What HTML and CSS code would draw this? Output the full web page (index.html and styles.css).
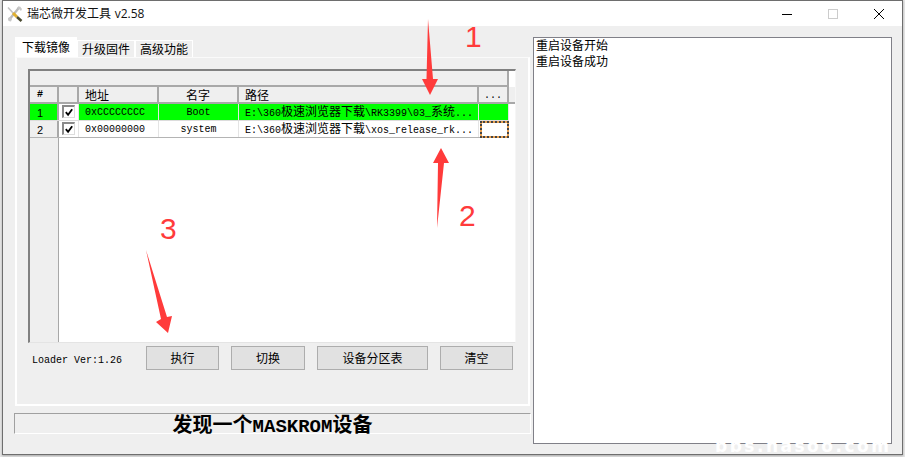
FILE: index.html
```html
<!DOCTYPE html>
<html lang="zh-CN">
<head>
  <meta charset="utf-8">
  <meta name="viewport" content="width=device-width,initial-scale=1">
  <title>瑞芯微开发工具</title>
  <link rel="stylesheet" href="styles.css">
</head>
<body>
  <div class="window">
    <div class="titlebar">
      <svg class="app-icon" width="16" height="16" viewBox="0 0 16 16">
        <path d="M12.500 1 2 14" stroke="#bcbcbc" stroke-width="2.400" fill="none"/>
        <path d="M10 1.500 13 .5 15 3 14 5 12.500 3.500z M1 12l2-1 2 2-1 2.500-2.500-.5z" fill="#c8c8c8"/>
        <path d="M1 1.500 7 8" stroke="#c4c4c4" stroke-width="1.600" fill="none"/>
        <path d="M6 7 10 11" stroke="#e0b030" stroke-width="3" fill="none"/>
        <path d="M10 11 14.500 15" stroke="#4a4a30" stroke-width="2.600" fill="none"/>
      </svg>
      <span class="title-text">瑞芯微开发工具 <span class="title-ver">v2.58</span></span>
      <div class="win-btns">
        <div class="win-btn"><svg width="12" height="12" viewBox="0 0 12 12"><path d="M1 6.500h10" stroke="#000"/></svg></div>
        <div class="win-btn"><svg width="12" height="12" viewBox="0 0 12 12"><rect x="1.500" y="1.500" width="9" height="9" fill="none" stroke="#ccc"/></svg></div>
        <div class="win-btn"><svg width="12" height="12" viewBox="0 0 12 12"><path d="M1 1l10 10M11 1 1 11" stroke="#000"/></svg></div>
      </div>
    </div>

    <div class="client">
      <div class="left">
        <div class="tabs">
          <div class="tab tab-on">下载镜像</div>
          <div class="tab">升级固件</div>
          <div class="tab">高级功能</div>
        </div>

        <div class="panel">
          <div class="grid">
            <div class="band"></div>
            <div class="head-wrap">
              <div class="cols">
                <div class="hd hd-num">#</div>
                <div class="hd"></div>
                <div class="hd hd-pad">地址</div>
                <div class="hd hd-mid">名字</div>
                <div class="hd hd-pad">路径</div>
                <div class="hd hd-more">...</div>
              </div>
            </div>

            <div class="cols row row-sel">
              <div class="td td-num">1</div>
              <div class="td td-chk"><span class="chk"><svg width="11" height="11" viewBox="0 0 11 11"><path d="M2 5l2.500 3L9 2" fill="none" stroke="#000" stroke-width="2"/></svg></span></div>
              <div class="td td-pad">0xCCCCCCCC</div>
              <div class="td td-mid">Boot</div>
              <div class="td td-pad">E:\360<span class="hz">极速浏览器下载</span>\RK3399\03_<span class="hz">系统</span>...</div>
              <div class="td"></div>
            </div>
            <div class="cols row">
              <div class="td td-num">2</div>
              <div class="td td-chk"><span class="chk"><svg width="11" height="11" viewBox="0 0 11 11"><path d="M2 5l2.500 3L9 2" fill="none" stroke="#000" stroke-width="2"/></svg></span></div>
              <div class="td td-pad">0x00000000</div>
              <div class="td td-mid">system</div>
              <div class="td td-pad">E:\360<span class="hz">极速浏览器下载</span>\xos_release_rk...</div>
              <div class="td td-focus"></div>
            </div>

            <div class="filler"><div class="gutter"></div></div>
          </div>

          <div class="toolbar">
            <div class="loader">Loader Ver:1.26</div>
            <button class="btn">执行</button>
            <button class="btn btn-b">切换</button>
            <button class="btn btn-w">设备分区表</button>
            <button class="btn">清空</button>
          </div>
        </div>

        <div class="status">发现一个<span class="status-asc">MASKROM</span>设备</div>
      </div>

      <div class="log">
        <div class="log-line">重启设备开始</div>
        <div>重启设备成功</div>
      </div>
    </div>
  </div>

  <svg class="marks" width="905" height="457" viewBox="0 0 905 457">
    <path d="M428 19 426.500 79 422 79 430 95 438 79 433 79z" fill="#ff3b3b"/>
    <path d="M437 228 438 163 433 163 441 148 449 163 444 163z" fill="#ff3b3b"/>
    <path d="M146 250 161 319 156 322 168 333 172 316 167 317z" fill="#ff3b3b"/>
  </svg>
  <span class="num num-1">1</span>
  <span class="num num-2">2</span>
  <span class="num num-3">3</span>
  <span class="wm">bbs.nasoo.com</span>
</body>
</html>
```

FILE: styles.css
```css
html, body { margin: 0; height: 100%; }
body { background: #e6e6e6; overflow: hidden; font: 12px/16px "Noto Sans CJK SC", sans-serif; color: #000; }
.window { box-sizing: border-box; width: 901px; height: 455px; margin-left: 2px; border: 1px solid #6e6e6e; background: #efefef; box-shadow: 0 1px 2px #aaa; }

.titlebar { display: flex; align-items: center; height: 25px; background: #fff; }
.app-icon { margin-left: 4px; margin-right: 4px; }
.title-text { font-size: 12px; color: #111; word-spacing: 1px; }
.title-ver { font-family: "Open Sans", sans-serif; }
.win-btns { display: flex; margin-left: auto; }
.win-btn { display: flex; align-items: center; justify-content: center; width: 46px; height: 25px; }

.client { display: flex; gap: 2px; padding: 11px 0 0 11px; }
.left { width: 517px; }

.tabs { display: flex; align-items: flex-end; height: 20px; padding-left: 1px; }
.tab { box-sizing: border-box; width: 58px; height: 17px; line-height: 16px; text-align: center; border: 1px solid #fff; border-bottom: 0; }
.tab-on { width: 62px; height: 20px; line-height: 18px; background: #fff; }

.panel { box-sizing: border-box; width: 515px; height: 349px; margin-left: 1px; padding: 11px 0 0 11px; border: 2px solid #fff; border-top: 1px solid #fafafa; }

.grid { box-sizing: border-box; display: flex; flex-direction: column; width: 488px; height: 274px; background: #fff; border-top: 2px solid #808080; border-left: 2px solid #808080; border-right: 1px solid #f6f6f6; border-bottom: 1px solid #e4e4e4; }
.band { box-sizing: border-box; flex: none; width: 479px; height: 16px; background: #efefef; border-right: 2px solid #a8a8a8; border-bottom: 2px solid #a8a8a8; }
.head-wrap { flex: none; background: #efefef; border-bottom: 2px solid #a8a8a8; }

.cols { display: grid; grid-template-columns: 29px 20px 80px 80px 240px 30px; width: 479px; }
.hd { box-sizing: border-box; height: 15px; line-height: 15px; border-right: 2px solid #a8a8a8; white-space: nowrap; }
.hd-num { padding-left: 7px; font: bold 10px/15px "Liberation Mono", monospace; }
.hd-pad { padding-left: 6px; }
.hd-mid { text-align: center; }
.hd-more { text-align: center; font: 10px/18px "Liberation Mono", monospace; }

.row { flex: none; height: 17px; border-bottom: 1px solid #b4b4b4; box-sizing: border-box; font: 10px/18px "Liberation Mono", monospace; }
.row-sel { background: #00ff00; border-bottom-color: #dcdcdc; }
.td { box-sizing: border-box; min-width: 0; height: 16px; white-space: nowrap; border-right: 1px solid #e4e4e4; }
.hz { font: 12px/14px "Noto Sans CJK SC", sans-serif; }
.td-num { padding-left: 7px; background: #efefef; border-right: 2px solid #a8a8a8; font-family: "Liberation Sans", sans-serif; font-size: 11px; }
.row-sel .td-num { background: #00ff00; }
.td-chk { padding: 1px 0 0 3px; background: #fff; }
.td-pad { padding-left: 6px; }
.td-mid { text-align: center; }
.td-focus { margin-left: 1px; background: linear-gradient(#fff, #fff) padding-box, #e9a050 border-box; border: 2px dotted #444; height: 17px; }

.chk { box-sizing: border-box; display: flex; align-items: center; justify-content: center; width: 13px; height: 13px; background: #fff; border: 2px solid #8a8a8a; border-right: 1px solid #dcdcdc; border-bottom: 1px solid #dcdcdc; }

.filler { flex: 1; }
.gutter { box-sizing: border-box; width: 29px; height: 100%; background: #efefef; border-right: 1px solid #a8a8a8; }

.toolbar { display: flex; align-items: center; gap: 12px; margin-top: 3px; }
.loader { width: 102px; padding-left: 4px; font: 10px/16px "Liberation Mono", monospace; margin-top: 5px; white-space: nowrap; }
.btn { box-sizing: border-box; width: 73px; height: 24px; padding: 0; background: #e1e1e1; border: 1px solid #adadad; font: 12px/16px "Noto Sans CJK SC", sans-serif; color: #000; }
.btn-b { width: 74px; }
.btn-w { width: 111px; }

.status { box-sizing: border-box; width: 517px; height: 21px; margin-top: 7px; text-align: center; font: bold 20px/19px "Noto Sans CJK SC", sans-serif; border-top: 1px solid #a0a0a0; border-left: 1px solid #a0a0a0; border-right: 1px solid #fff; border-bottom: 1px solid #fff; white-space: nowrap; }
.status-asc { font: bold 19px/19px "Liberation Mono", monospace; }

.log { box-sizing: border-box; width: 359px; height: 407px; padding: 0 2px; background: #fff; border: 1px solid #808088; }
.log-line { margin-top: -1px; }

.marks { position: absolute; left: 0; top: 0; pointer-events: none; }
.num { position: absolute; font: 30px/30px "Liberation Sans", sans-serif; color: #ff3b3b; }
.num-1 { left: 465px; top: 22px; }
.num-2 { left: 459px; top: 201px; }
.num-3 { left: 160px; top: 214px; }
.wm { position: absolute; left: 715px; top: 436px; font: bold 17px/20px "DejaVu Sans", sans-serif; letter-spacing: 2.500px; color: #fff; white-space: nowrap; }
```
